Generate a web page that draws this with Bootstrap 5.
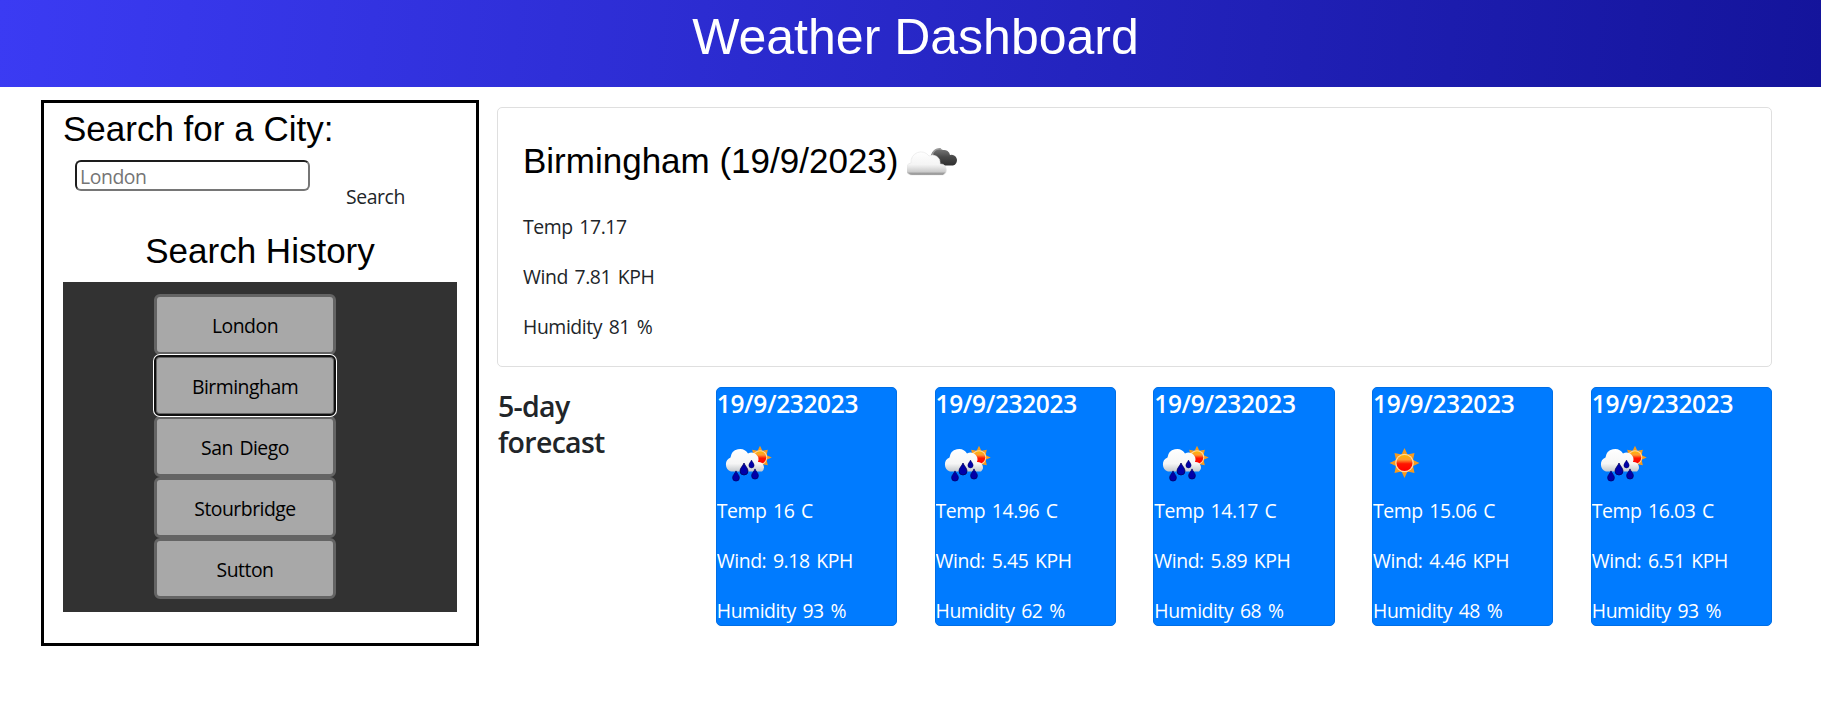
<!DOCTYPE html>
<html lang="en">
<head>
<meta charset="utf-8">
<title>Weather Dashboard</title>
<link href="https://cdn.jsdelivr.net/npm/bootstrap@5.3.0/dist/css/bootstrap.min.css" rel="stylesheet">
<style>
body{font-family:"Open Sans","Noto Sans",sans-serif;font-size:19.4px;letter-spacing:-.42px;word-spacing:2px;line-height:30px;color:#212529;background:#fff}
.top-bar{height:87px;padding-top:7px;padding-left:10px;background:linear-gradient(95deg,#3b3bf3,#14149b)}
h1,h2,.arial{font-family:"Liberation Sans",Arial,sans-serif;font-weight:400;margin:0;letter-spacing:0;word-spacing:0}
h1{font-size:50px;line-height:60px;color:#fff}
h2{font-size:35px;line-height:42px;color:#000}
.page-body{padding:13px 49px 0 41px;gap:18px}
.search-box{width:438px;height:546px;border:3px solid #000;padding:5px 19px 0}
.city-input{width:235px;height:31px;border:2px solid #767676;border-top-color:#1d1d1d;border-left-color:#1d1d1d;border-radius:6px;padding:1px 3px 0;margin:10px 0 0 12px;line-height:27px;outline:0;letter-spacing:-.42px}
.city-input::placeholder{color:#757575;opacity:1}
.search-btn{font-size:19.4px;line-height:30px;padding:0;border:0;margin:32px 0 0 36px;color:#212529;letter-spacing:-.42px}
.hist-title{margin-top:18px}
.history{height:330px;background:#323232;padding:12px 0 0 91px;margin-top:10px}
.city-btn{width:182px;height:61px;border:3px solid #646464;border-radius:6px;background:#a8a8a8;color:#000;padding:3px 0 0;display:block;letter-spacing:-.5px;word-spacing:2px}
.city-btn.picked{border:2px solid #101010;box-shadow:0 0 0 1px #fff,inset 0 0 0 1px #646464;position:relative}
.main-col{padding-top:7px}
.today{height:260px;border:1px solid #dfdfdf;border-radius:5px;padding:32px 26px 0 25px}
.today p,.day p{margin:0 0 20px}
.today p:first-of-type{margin-top:30px}
.forecast{display:grid;grid-template-columns:repeat(6,minmax(0,1fr));column-gap:37.5px;margin-top:20px}
.forecast h3{font-size:28.5px;font-weight:600;line-height:36px;margin:1px 0 0 1px;letter-spacing:-.7px}
.day{height:239px;border:1px solid #006fe6;border-radius:5px;background:#007bff;color:#fff;overflow:hidden}
.day h4{font-size:24.5px;font-weight:600;line-height:30px;margin:1px 0 13px;letter-spacing:-.35px}
.day svg{display:block;width:62px;height:62px;margin-bottom:2px}
</style>
</head>
<body>
<svg width="0" height="0" class="position-absolute">
<defs>
<linearGradient id="white" x2="0" y2="1"><stop offset="0" stop-color="#fff"/><stop offset=".65" stop-color="#f6f6f6"/><stop offset="1" stop-color="#c4c8cc"/></linearGradient>
<linearGradient id="grey" x2="0" y2="1"><stop offset="0" stop-color="#fff"/><stop offset=".55" stop-color="#f4f4f4"/><stop offset=".85" stop-color="#ccc"/><stop offset="1" stop-color="#777"/></linearGradient>
<linearGradient id="dark" x2="0" y2="1"><stop offset="0" stop-color="#777"/><stop offset=".5" stop-color="#484848"/><stop offset="1" stop-color="#303030"/></linearGradient>
<linearGradient id="red" x2="0" y2="1"><stop offset="0" stop-color="#ffb800"/><stop offset=".3" stop-color="#ff9a30"/><stop offset=".55" stop-color="#ff1500"/><stop offset="1" stop-color="#f00"/></linearGradient>
<g id="rays"><path fill="#f79a1c" d="M0-15 3-8.500 10-10 8.500-3 15 0 8.500 3 10 10 3 8.500 0 15-3 8.500-10 10-8.500 3-15 0-8.500-3-10-10-3-8.500Z"/><circle r="9.300" fill="#ffd9a0"/><circle r="8" fill="url(#red)"/></g>
<path id="drop" fill="#0000a8" stroke="#000060" stroke-width=".8" d="M0-6C1-3 4-1 4 2A4 4 0 0 1-4 2C-4-1-1-3 0-6Z"/>
<symbol id="sun" viewBox="0 0 62 62"><use href="#rays" x="31.500" y="31"/></symbol>
<symbol id="rain" viewBox="0 0 62 62">
<use href="#rays" transform="translate(43 25.500) scale(.78)"/>
<path fill="url(#white)" d="M14 39.500A7.500 7.500 0 0 1 13.500 25.500A9.500 9.500 0 0 1 31 21.500A7 7 0 0 1 41 30A5.400 5.400 0 0 1 45 39.500Z"/>
<use href="#drop" x="27" y="37"/><use href="#drop" transform="translate(34.500 32) scale(.65)"/><use href="#drop" transform="translate(38 42) scale(.85)"/><use href="#drop" transform="translate(19 44) scale(.85)"/>
</symbol>
</defs>
</svg>
<header class="top-bar text-center"><h1>Weather Dashboard</h1></header>
<main class="page-body d-flex align-items-start">
<aside class="search-box flex-shrink-0">
<h2>Search for a City:</h2>
<form class="d-flex align-items-start">
<input class="city-input" type="text" placeholder="London" aria-label="City">
<button class="btn search-btn" type="button">Search</button>
</form>
<h2 class="text-center hist-title">Search History</h2>
<div class="history">
<button class="city-btn">London</button>
<button class="city-btn picked">Birmingham</button>
<button class="city-btn">San Diego</button>
<button class="city-btn">Stourbridge</button>
<button class="city-btn">Sutton</button>
</div>
</aside>
<div class="main-col flex-grow-1">
<section class="today">
<div class="d-flex"><h2>Birmingham (19/9/2023)</h2>
<svg width="52" height="30" viewBox="0 0 52 30" style="margin:7px 0 0 9px"><path fill="url(#dark)" d="M24 9A8 8 0 0 1 36 3A6 6 0 0 1 43 8A5 5 0 0 1 46 18.500H33Z"/><path fill="none" stroke="#999" stroke-width="1.500" d="M25 9A7.500 7.500 0 0 1 34 2"/><path fill="url(#grey)" stroke="#e4e4e4" stroke-width=".6" d="M6 28A6 6 0 0 1 4 16A10 10 0 0 1 22 9A7.500 7.500 0 0 1 33 17A5.800 5.800 0 0 1 36 28Z"/></svg></div>
<p>Temp 17.17</p><p>Wind 7.81 KPH</p><p>Humidity 81 %</p>
</section>
<section class="forecast">
<h3>5-day<br>forecast</h3>
<div class="day"><h4>19/9/232023</h4><svg><use href="#rain"/></svg><p>Temp 16 C</p><p>Wind: 9.18 KPH</p><p>Humidity 93 %</p></div>
<div class="day"><h4>19/9/232023</h4><svg><use href="#rain"/></svg><p>Temp 14.96 C</p><p>Wind: 5.45 KPH</p><p>Humidity 62 %</p></div>
<div class="day"><h4>19/9/232023</h4><svg><use href="#rain"/></svg><p>Temp 14.17 C</p><p>Wind: 5.89 KPH</p><p>Humidity 68 %</p></div>
<div class="day"><h4>19/9/232023</h4><svg><use href="#sun"/></svg><p>Temp 15.06 C</p><p>Wind: 4.46 KPH</p><p>Humidity 48 %</p></div>
<div class="day"><h4>19/9/232023</h4><svg><use href="#rain"/></svg><p>Temp 16.03 C</p><p>Wind: 6.51 KPH</p><p>Humidity 93 %</p></div>
</section>
</div>
</main>
<script src="https://cdn.jsdelivr.net/npm/bootstrap@5.3.0/dist/js/bootstrap.bundle.min.js"></script>
</body>
</html>
